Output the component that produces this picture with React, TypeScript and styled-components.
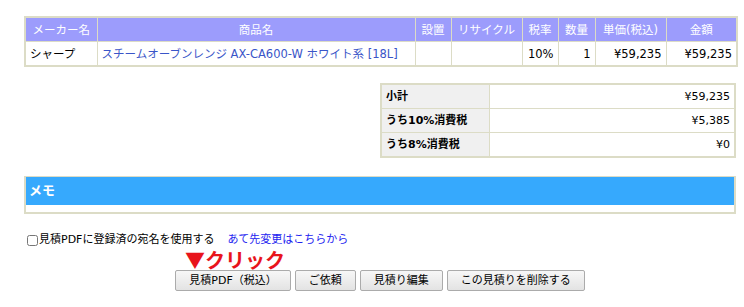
import React from "react";
import styled, { createGlobalStyle } from "styled-components";

const FONT = `"DejaVu Sans", "Noto Sans CJK JP", sans-serif`;

const Global = createGlobalStyle`
  html, body { margin: 0; padding: 0; background: #fff; }
  body {
    font-family: ${FONT};
    font-size: 11px;
    line-height: 16px;
    color: #000;
  }
`;

const Page = styled.div`
  width: 712px;
  padding: 16px 8px 0 24px;
  display: flex;
  flex-direction: column;
`;

const ItemTable = styled.table`
  width: 712px;
  border-collapse: collapse;
  border: 2px solid #dcdcc6;
  table-layout: fixed;
`;

const Th = styled.th`
  background: #9c9cfc;
  color: #fff;
  font-weight: normal;
  height: 23px;
  padding: 0 4px;
  border: 1px solid #dcdcc6;
  text-align: center;
  white-space: nowrap;
  font-size: 11.5px;
  line-height: 16px;
`;

const Td = styled.td<{ $align?: string }>`
  height: 23px;
  padding: 0 4px;
  border: 1px solid #dcdcc6;
  text-align: ${(p) => p.$align || "left"};
  white-space: nowrap;
  font-size: 11.5px;
  line-height: 16px;
`;

const ProductLink = styled.span`
  color: #3a55c8;
`;

const SummaryWrap = styled.div`
  display: flex;
  justify-content: flex-end;
  margin-top: 16px;
`;

const SummaryTable = styled.table`
  width: 356px;
  border-collapse: collapse;
  border: 2px solid #dcdcc6;
  table-layout: fixed;
`;

const SumLabel = styled.th`
  width: 99px;
  background: #f0f0f0;
  text-align: left;
  font-weight: bold;
  height: 23px;
  padding: 0 4px;
  border: 1px solid #dcdcc6;
  font-size: 11px;
  line-height: 16px;
`;

const SumValue = styled.td`
  text-align: right;
  height: 23px;
  padding: 0 4px;
  border: 1px solid #dcdcc6;
  font-size: 11px;
  line-height: 16px;
`;

const Memo = styled.div`
  margin-top: 18px;
  border: 2px solid #dcdcc6;
  border-top-width: 1px;
  display: flex;
  flex-direction: column;
`;

const MemoHead = styled.div`
  background: #36a9fd;
  color: #fff;
  font-weight: bold;
  font-size: 13px;
  height: 28px;
  line-height: 28px;
  padding-left: 3px;
`;

const MemoBody = styled.div`
  height: 7px;
  background: #fff;
`;

const OptionRow = styled.div`
  margin-top: 18px;
  display: flex;
  align-items: center;
  height: 16px;
  padding-left: 3px;
`;

const Check = styled.input`
  margin: 0 1px 0 0;
  width: 11px;
  height: 11px;
`;

const OptionText = styled.span`
  font-size: 11px;
`;

const ChangeLink = styled.a`
  margin-left: 13px;
  color: #2323f0;
  text-decoration: none;
  font-size: 11px;
`;

const ClickNote = styled.div`
  margin-left: 161px;
  margin-top: 1px;
  color: #e8141c;
  font-weight: bold;
  font-size: 20px;
  line-height: 21px;
  font-family: "Noto Sans CJK JP", sans-serif;
`;

const Buttons = styled.div`
  display: flex;
  justify-content: center;
  gap: 4px;
`;

const Btn = styled.button`
  height: 21px;
  padding: 0 13px;
  font-family: ${FONT};
  font-size: 11px;
  line-height: 16px;
  color: #000;
  background: linear-gradient(#f7f7f7, #e3e3e3);
  border: 1px solid #ababab;
  border-radius: 2px;
`;

export default function App() {
  return (
    <>
      <Global />
      <Page>
        <ItemTable>
          <colgroup>
            <col style={{ width: 72 }} />
            <col style={{ width: 318 }} />
            <col style={{ width: 36 }} />
            <col style={{ width: 71 }} />
            <col style={{ width: 36 }} />
            <col style={{ width: 37 }} />
            <col style={{ width: 71 }} />
            <col style={{ width: 71 }} />
          </colgroup>
          <thead>
            <tr>
              <Th>メーカー名</Th>
              <Th>商品名</Th>
              <Th>設置</Th>
              <Th>リサイクル</Th>
              <Th>税率</Th>
              <Th>数量</Th>
              <Th>単価(税込)</Th>
              <Th>金額</Th>
            </tr>
          </thead>
          <tbody>
            <tr>
              <Td>シャープ</Td>
              <Td>
                <ProductLink>スチームオーブンレンジ AX-CA600-W ホワイト系 [18L]</ProductLink>
              </Td>
              <Td />
              <Td />
              <Td $align="right">10%</Td>
              <Td $align="right">1</Td>
              <Td $align="right">¥59,235</Td>
              <Td $align="right">¥59,235</Td>
            </tr>
          </tbody>
        </ItemTable>

        <SummaryWrap>
          <SummaryTable>
            <tbody>
              <tr>
                <SumLabel>小計</SumLabel>
                <SumValue>¥59,235</SumValue>
              </tr>
              <tr>
                <SumLabel>うち10%消費税</SumLabel>
                <SumValue>¥5,385</SumValue>
              </tr>
              <tr>
                <SumLabel>うち8%消費税</SumLabel>
                <SumValue>¥0</SumValue>
              </tr>
            </tbody>
          </SummaryTable>
        </SummaryWrap>

        <Memo>
          <MemoHead>メモ</MemoHead>
          <MemoBody />
        </Memo>

        <OptionRow>
          <Check type="checkbox" />
          <OptionText>見積PDFに登録済の宛名を使用する</OptionText>
          <ChangeLink href="#">あて先変更はこちらから</ChangeLink>
        </OptionRow>

        <ClickNote>▼クリック</ClickNote>

        <Buttons>
          <Btn>見積PDF（税込）</Btn>
          <Btn>ご依頼</Btn>
          <Btn>見積り編集</Btn>
          <Btn>この見積りを削除する</Btn>
        </Buttons>
      </Page>
    </>
  );
}
